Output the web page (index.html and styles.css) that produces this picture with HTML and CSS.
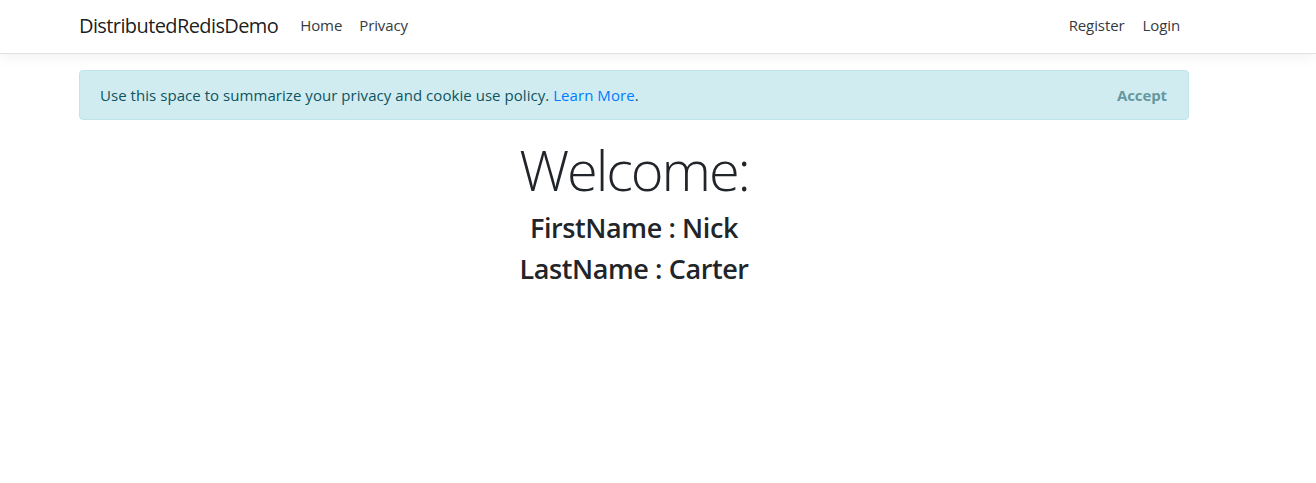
FILE: index.html
```html
<!DOCTYPE html>
<html lang="en">
<head>
<meta charset="utf-8">
<title>DistributedRedisDemo</title>
<link rel="stylesheet" href="styles.css">
</head>
<body>
<header class="navbar">
  <div class="container nav-inner">
    <a class="brand" href="#">DistributedRedisDemo</a>
    <ul class="nav nav-main">
      <li><a class="nav-link" href="#">Home</a></li>
      <li><a class="nav-link" href="#">Privacy</a></li>
    </ul>
    <ul class="nav nav-right">
      <li><a class="nav-link" href="#">Register</a></li>
      <li><a class="nav-link" href="#">Login</a></li>
    </ul>
  </div>
</header>
<div class="container">
  <div class="alert">
    <span>Use this space to summarize your privacy and cookie use policy. <a class="alert-link" href="#">Learn More</a>.</span>
    <button class="accept" type="button">Accept</button>
  </div>
  <main class="welcome">
    <h1 class="display">Welcome:</h1>
    <h3 class="name">FirstName : Nick</h3>
    <h3 class="name">LastName : Carter</h3>
  </main>
</div>
</body>
</html>
```
FILE: styles.css
```css
* { box-sizing: border-box; }
html, body { margin: 0; padding: 0; }
body {
  font-family: "Open Sans", "Noto Sans", "Liberation Sans", sans-serif;
  font-size: 16px;
  line-height: 1.5;
  color: #212529;
  background: #fff;
}
a { text-decoration: none; }
.container {
  width: 1140px;
  margin-left: 64px;
  padding: 0 15px;
}
.navbar {
  background: #fff;
  border-bottom: 1px solid #dee2e6;
  box-shadow: 0 4px 12px rgba(0,0,0,.05);
  padding: 7px 0 9px;
  margin-bottom: 16px;
}
.nav-inner {
  display: flex;
  align-items: center;
  height: 37px;
}
.brand {
  font-size: 20px;
  line-height: 30px;
  color: rgba(0,0,0,.9);
  margin-right: 14px;
  letter-spacing: -0.6px;
}
.nav {
  display: flex;
  list-style: none;
  margin: 0;
  padding: 0;
}
.nav-main { flex: 1; }
.nav-link {
  display: block;
  padding: 8px;
  font-size: 15px;
  color: #343a40;
  letter-spacing: -0.1px;
}
.nav-main li + li .nav-link { padding-left: 9px; }
.nav-right .nav-link { padding: 8px 9px; }
.alert {
  display: flex;
  justify-content: space-between;
  align-items: center;
  padding: 12px 20px;
  background: #d1ecf1;
  border: 1px solid #bee5eb;
  border-radius: 4px;
  color: #0c5460;
  font-size: 15px;
  margin-bottom: 16px;
  height: 50px;
  letter-spacing: 0.05px;
}
.alert-link { color: #007bff; }
.accept {
  border: 0;
  background: transparent;
  font-family: inherit;
  font-size: 15px;
  font-weight: 700;
  color: #0c5460;
  opacity: .55;
  padding: 0;
  margin-right: 1px;
  letter-spacing: -0.1px;
}
.welcome { text-align: center; }
.display {
  font-size: 56px;
  font-weight: 300;
  line-height: 1.2;
  margin: 0 0 8px;
  letter-spacing: -2.1px;
}
.name {
  font-size: 27px;
  font-weight: 600;
  line-height: 33px;
  margin: 0 0 8px;
  letter-spacing: -0.4px;
}
.name:first-of-type { margin-top: 1px; }
```
